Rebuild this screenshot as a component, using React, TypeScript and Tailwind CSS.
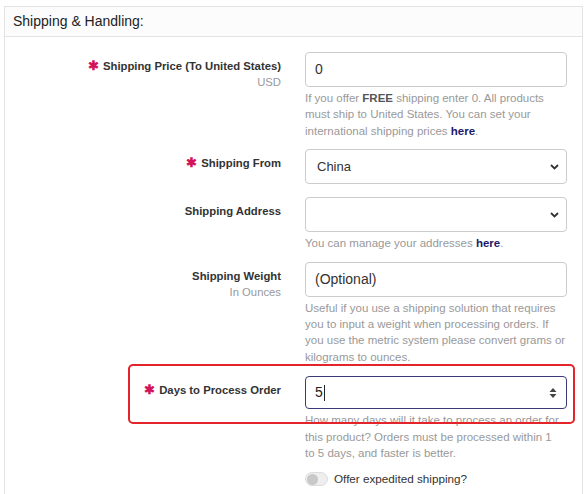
import { ReactNode } from "react";

function Req() {
  return <span className="mr-1 text-[12.5px] text-[#d4145a]">✱</span>;
}

function Chevron() {
  return (
    <svg className="absolute right-[7px] top-1/2 -translate-y-1/2" width="9" height="6" viewBox="0 0 9 6">
      <path d="M1 1l3.5 3.5L8 1" fill="none" stroke="#333" strokeWidth="1.8" />
    </svg>
  );
}

function Row({
  label,
  sub,
  required,
  children,
  className = "",
}: {
  label: string;
  sub?: string;
  required?: boolean;
  children: ReactNode;
  className?: string;
}) {
  return (
    <div className={`relative flex gap-6 ${className}`}>
      <div className="w-[276px] pt-[7px] text-right">
        <div className="text-[11.3px] font-bold leading-[15px] text-[#333]">
          {required && <Req />}
          {label}
        </div>
        {sub && <div className="mt-[1px] text-[11.3px] leading-[15px] text-[#999]">{sub}</div>}
      </div>
      <div className="w-[262px]">{children}</div>
    </div>
  );
}

const inputBox =
  "relative flex h-[35px] items-center rounded-[4px] border border-[#ccc] bg-white px-[9px] text-[14px] text-[#333]";
const selectBox =
  "relative flex h-[35px] items-center rounded-[4px] border border-[#ccc] bg-white px-[11px] text-[13px] text-[#333]";
const help = "mt-[3px] text-[11.5px] leading-[16.4px] text-[#999]";

export default function App() {
  return (
    <div className="h-[494px] w-[586px] overflow-hidden bg-white pl-[4px] pt-[6px] font-['Liberation_Sans',Arial,sans-serif]">
      <div className="h-[520px] w-[579px] border border-[#e3e3e3]">
        <div className="flex h-[30px] items-center border-b border-[#e3e3e3] bg-[#fcfcfc] pl-[8px] text-[14px] text-[#222]">
          Shipping &amp; Handling:
        </div>

        <div className="flex flex-col pt-[15px]">
          <Row label="Shipping Price (To United States)" sub="USD" required>
            <div className={inputBox}>0</div>
            <p className={help}>
              If you offer <b className="text-[#555]">FREE</b> shipping enter 0. All products must ship to United
              States. You can set your international shipping prices{" "}
              <b className="text-[#1c1a6b]">here</b>.
            </p>
          </Row>

          <Row label="Shipping From" required className="mt-[10px]">
            <div className={selectBox}>
              China
              <Chevron />
            </div>
          </Row>

          <Row label="Shipping Address" className="mt-[13px]">
            <div className={selectBox}>
              <Chevron />
            </div>
            <p className={help}>
              You can manage your addresses <b className="text-[#1c1a6b]">here</b>.
            </p>
          </Row>

          <Row label="Shipping Weight" sub="In Ounces" className="mt-[10px]">
            <div className={inputBox}>(Optional)</div>
            <p className={help}>
              Useful if you use a shipping solution that requires you to input a weight when processing orders. If
              you use the metric system please convert grams or kilograms to ounces.
            </p>
          </Row>

          <Row label="Days to Process Order" required className="mt-[11px]">
            <div className="relative flex h-[33px] items-center rounded-[4px] border border-[#3b3a7a] bg-white px-[9px] text-[14px] text-[#222]">
              5<span className="ml-[1px] inline-block h-[16px] w-px bg-[#222]" />
              <svg className="absolute right-[9px] top-1/2 -translate-y-1/2" width="8" height="12" viewBox="0 0 8 12">
                <path d="M4 1L7.5 5H0.5z M4 11L7.5 7H0.5z" fill="#444" />
              </svg>
            </div>
            <p className={`${help} pr-[6px]`}>
              How many days will it take to process an order for this product? Orders must be processed within 1 to
              5 days, and faster is better.
            </p>
            <div className="mt-[9px] flex items-center gap-[6px]">
              <div className="flex h-[14px] w-[23px] items-center rounded-full border border-[#ddd] bg-[#eee] pl-[1px]">
                <div className="h-[11px] w-[11px] rounded-full bg-[#c8c8c8]" />
              </div>
              <span className="text-[11.7px] text-[#333]">Offer expedited shipping?</span>
            </div>
            <div className="pointer-events-none absolute left-[123px] top-[-12px] h-[60px] w-[447px] rounded-[5px] border-2 border-[#e3242b]" />
          </Row>
        </div>
      </div>
    </div>
  );
}
